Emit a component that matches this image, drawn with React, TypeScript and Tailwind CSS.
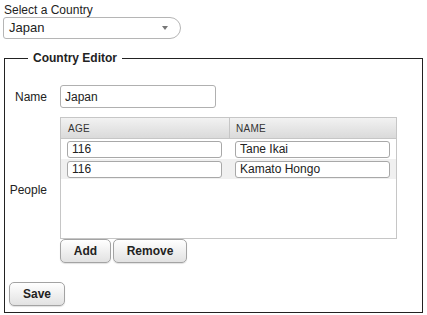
import { useState } from "react";

interface Person {
  age: string;
  name: string;
}

const btn =
  "h-[24px] rounded-[5px] border border-[#a3a3a3] bg-gradient-to-b from-white to-[#e2e2e2] text-[12px] font-bold text-[#222] shadow-[0_1px_1px_rgba(0,0,0,0.12)]";

export default function App() {
  const [country, setCountry] = useState("Japan");
  const [people, setPeople] = useState<Person[]>([
    { age: "116", name: "Tane Ikai" },
    { age: "116", name: "Kamato Hongo" },
  ]);

  const update = (i: number, key: keyof Person, value: string) => {
    setPeople((prev) => prev.map((p, j) => (j === i ? { ...p, [key]: value } : p)));
  };

  return (
    <div className="w-[427px] h-[315px] bg-white font-['Liberation_Sans',Arial,sans-serif] text-[12px] text-[#222] overflow-hidden">
      <div className="pl-[4px] pt-[3px] leading-[14px]">Select a Country</div>

      {/* select */}
      <div className="ml-[3px] w-[178px] h-[22px] flex items-center justify-between border border-[#b5b5b5] rounded-l-[3px] rounded-r-[11px] pl-[5px] pr-[12px] text-[13px]">
        <span>{country}</span>
        <svg width="6" height="4" viewBox="0 0 6 4">
          <path d="M0 0h6L3 4z" fill="#777" />
        </svg>
      </div>

      {/* editor */}
      <fieldset className="mx-[4px] mt-[12px] h-[262px] border border-[#222] pt-[20px]">
        <legend className="ml-[23px] px-[5px] font-bold leading-[14px]">Country Editor</legend>

        <div className="grid grid-cols-[42px_auto] gap-x-[13px] gap-y-[9px] items-center">
          <div className="text-right">Name</div>
          <input
            value={country}
            onChange={(e) => setCountry(e.target.value)}
            className="w-[156px] h-[23px] border border-[#b0b0b0] rounded-[3px] pl-[4px] text-[12px] outline-none"
          />

          <div className="text-right">People</div>
          <div>
            <div className="w-[337px] h-[122px] border border-[#c6c6c6]">
              <div className="flex h-[21px] bg-gradient-to-b from-[#f2f2f2] to-[#dadada] border-b border-[#c6c6c6] text-[10px] tracking-[0.3px] text-[#333]">
                <div className="w-[169px] flex items-center pl-[7px] border-r border-[#c6c6c6]">AGE</div>
                <div className="flex-1 flex items-center pl-[6px]">NAME</div>
              </div>
              {people.map((p, i) => (
                <div
                  key={i}
                  className={`flex h-[20px] items-center ${i % 2 ? "bg-[#f0f0f0]" : "bg-white"}`}
                >
                  <div className="w-[169px] pl-[6px]">
                    <input
                      value={p.age}
                      onChange={(e) => update(i, "age", e.target.value)}
                      className="w-[155px] h-[17px] border border-[#a8a8a8] rounded-[3px] bg-white pl-[4px] text-[12px] outline-none"
                    />
                  </div>
                  <div className="flex-1 pl-[5px]">
                    <input
                      value={p.name}
                      onChange={(e) => update(i, "name", e.target.value)}
                      className="w-[155px] h-[17px] border border-[#a8a8a8] rounded-[3px] bg-white pl-[4px] text-[12px] outline-none"
                    />
                  </div>
                </div>
              ))}
            </div>
            <div className="flex gap-[2px]">
              <button
                className={`${btn} w-[51px]`}
                onClick={() => setPeople((prev) => [...prev, { age: "", name: "" }])}
              >
                Add
              </button>
              <button
                className={`${btn} w-[74px]`}
                onClick={() => setPeople((prev) => prev.slice(0, -1))}
              >
                Remove
              </button>
            </div>
          </div>
        </div>

        <button className={`${btn} w-[56px] ml-[4px] mt-[19px]`}>Save</button>
      </fieldset>
    </div>
  );
}
